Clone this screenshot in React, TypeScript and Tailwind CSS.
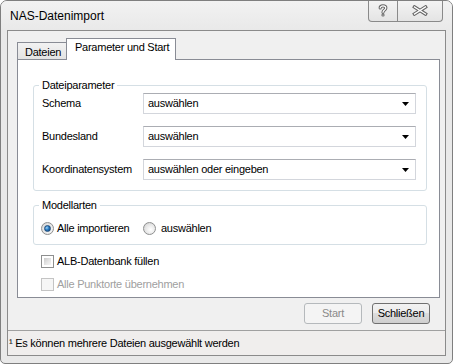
import React from "react";

function Combo({ text }: { text: string }) {
  return (
    <div className="w-[273px] h-[21px] flex items-center border border-[#d3d6dc] border-t-[#abadb3] bg-white pl-[4px] pr-[6px]">
      <span className="flex-1 truncate">{text}</span>
      <svg width="7" height="4" viewBox="0 0 7 4">
        <path d="M0 0 H7 L3.5 4 Z" fill="#000" />
      </svg>
    </div>
  );
}

function Radio({ checked }: { checked: boolean }) {
  return (
    <div className="w-[13px] h-[13px] rounded-full border border-[#8e8f8f] bg-[radial-gradient(circle_at_60%_60%,#ffffff_0%,#e6e6e6_55%,#c8c8c8_100%)] flex items-center justify-center">
      {checked && (
        <div className="w-[7px] h-[7px] rounded-full bg-[radial-gradient(circle_at_35%_35%,#9fd4f5_0%,#2a7cc4_45%,#0d3f72_100%)] border border-[#1f4c7a]" />
      )}
    </div>
  );
}

function Check({ disabled }: { disabled?: boolean }) {
  return disabled ? (
    <div className="w-[13px] h-[13px] border border-[#c4c4c4] bg-[#f6f6f6]" />
  ) : (
    <div className="w-[13px] h-[13px] border border-[#8e8f8f] bg-white p-[2px]">
      <div className="w-full h-full bg-[linear-gradient(135deg,#cbcbcb_0%,#e8e8e8_60%,#f6f6f6_100%)]" />
    </div>
  );
}

export default function App() {
  return (
    <div className="w-[453px] h-[364px] flex flex-col bg-[#e9e9e9] border border-[#7f7f7f] rounded-t-[7px] rounded-b-[5px] text-[11px] leading-[13px] text-black font-['Liberation_Sans',Arial,sans-serif] overflow-hidden">
      {/* Title bar */}
      <div className="h-[29px] flex items-start bg-[linear-gradient(#f2f2f2,#e9e9e9)]">
        <div className="pl-[9px] pt-[8px] text-[12px] leading-[14px]">NAS-Datenimport</div>
        <div className="ml-auto mr-[9px] mt-[-1px] flex h-[22px] border border-t-0 border-[#8a8a8a] rounded-b-[4px] bg-[linear-gradient(#f4f4f4,#e4e4e4)] overflow-hidden">
          <div className="w-[29px] h-full flex items-center justify-center border-r border-[#8a8a8a]">
            <svg width="10" height="13" viewBox="0 0 10 13">
              <path d="M2.2 4 C2.2 1.2 7.8 1.2 7.8 4 C7.8 6 5 6 5 8.3" fill="none" stroke="#666" strokeWidth="3.2" strokeLinecap="round" />
              <circle cx="5" cy="11" r="1.6" fill="#666" />
              <path d="M2.2 4 C2.2 1.2 7.8 1.2 7.8 4 C7.8 6 5 6 5 8.3" fill="none" stroke="#fff" strokeWidth="1.2" strokeLinecap="round" />
              <circle cx="5" cy="11" r="0.6" fill="#fff" />
            </svg>
          </div>
          <div className="w-[44px] h-full flex items-center justify-center">
            <svg width="16" height="11" viewBox="0 0 16 11">
              <path d="M2.5 2 L13.5 9 M13.5 2 L2.5 9" stroke="#666" strokeWidth="3.4" strokeLinecap="square" />
              <path d="M2.5 2 L13.5 9 M13.5 2 L2.5 9" stroke="#fff" strokeWidth="1.3" strokeLinecap="square" />
            </svg>
          </div>
        </div>
      </div>

      {/* Client area */}
      <div className="mx-[6px] h-[326px] flex flex-col border border-[#8b8b8b] bg-[#f0f0f0] tracking-[-0.25px]">
        <div className="pt-[7px] pl-[9px] pr-[5px] flex flex-col">
          {/* Tabs */}
          <div className="flex items-end h-[21px] relative z-10">
            <div className="w-[49px] h-[17px] border-l border-t border-[#898c95] bg-[linear-gradient(#f2f2f2,#e3e3e3)] pl-[7px] pt-[3px] leading-[13px]">
              Dateien
            </div>
            <div className="w-[110px] h-[22px] mb-[-1px] border-l border-t border-r border-[#898c95] bg-white pl-[8px] pt-[2px] leading-[13px]">
              Parameter und Start
            </div>
          </div>
          {/* Panel */}
          <div className="h-[239px] border border-[#898c95] bg-white pl-[15px] pr-[12px] flex flex-col">
            {/* Dateiparameter */}
            <div className="relative mt-[25px] border border-[#d5dfe5] rounded-[3px] pt-[7px] pb-[10px] pl-[8px] pr-[7px] flex flex-col gap-[12px]">
              <span className="absolute left-[5px] top-[-7px] px-[3px] bg-white leading-[13px]">Dateiparameter</span>
              <div className="flex items-center">
                <span className="w-[101px]">Schema</span>
                <Combo text="auswählen" />
              </div>
              <div className="flex items-center">
                <span className="w-[101px]">Bundesland</span>
                <Combo text="auswählen" />
              </div>
              <div className="flex items-center">
                <span className="w-[101px]">Koordinatensystem</span>
                <Combo text="auswählen oder eingeben" />
              </div>
            </div>
            {/* Modellarten */}
            <div className="relative mt-[14px] border border-[#d5dfe5] rounded-[3px] pt-[16px] pb-[9px] pl-[7px] flex items-center">
              <span className="absolute left-[5px] top-[-7px] px-[3px] bg-white leading-[13px]">Modellarten</span>
              <div className="w-[102px] flex items-center gap-[3px]">
                <Radio checked />
                <span>Alle importieren</span>
              </div>
              <div className="flex items-center gap-[5px]">
                <Radio checked={false} />
                <span>auswählen</span>
              </div>
            </div>
            {/* Checkboxes */}
            <div className="mt-[10px] ml-[8px] flex flex-col gap-[10px]">
              <div className="flex items-center gap-[3px] h-[13px]">
                <Check />
                <span>ALB-Datenbank füllen</span>
              </div>
              <div className="flex items-center gap-[3px] h-[13px] text-[#a0a0a0]">
                <Check disabled />
                <span>Alle Punktorte übernehmen</span>
              </div>
            </div>
          </div>
        </div>

        {/* Buttons */}
        <div className="mt-[5px] flex justify-end gap-[10px] pr-[15px]">
          <div className="w-[58px] h-[21px] flex items-center justify-center border border-[#b5b9bc] rounded-[3px] bg-[#f4f4f4] text-[#8a8a8a]">
            Start
          </div>
          <div className="w-[58px] h-[21px] flex items-center justify-center border border-[#707070] rounded-[3px] bg-[linear-gradient(#f2f2f2_0%,#ebebeb_50%,#dddddd_50%,#cfcfcf_100%)]">
            Schließen
          </div>
        </div>

        {/* Footer */}
        <div className="mt-auto h-[25px] border-t border-[#a0a0a0] bg-[#f0eeed] flex items-center pl-[1px]">
          ¹ Es können mehrere Dateien ausgewählt werden
        </div>
      </div>
    </div>
  );
}
